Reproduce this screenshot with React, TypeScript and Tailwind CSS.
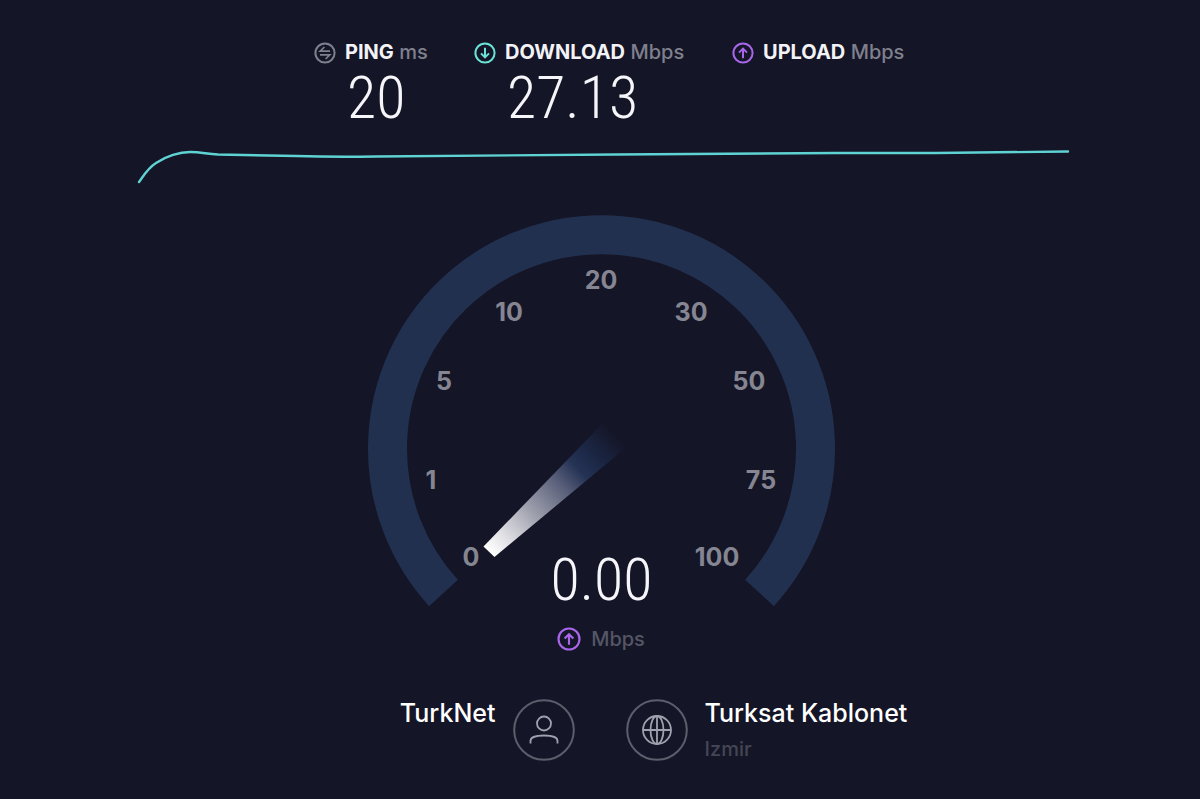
import React from "react";

const numberFont = "font-['Roboto_Condensed','Roboto',sans-serif] font-light text-[60px] leading-[56px] text-[#f6f6fa]";

const stats = [
    { id: 1, icon: "ping", label: "PING", unit: "ms", value: "20" },
    { id: 2, icon: "down", label: "DOWNLOAD", unit: "Mbps", value: "27.13" },
    { id: 3, icon: "up", label: "UPLOAD", unit: "Mbps", value: "" },
];

const marks = [
    { text: "0", x: 111, y: 349 },
    { text: "1", x: 71, y: 272 },
    { text: "5", x: 84, y: 173 },
    { text: "10", x: 149, y: 104 },
    { text: "20", x: 241, y: 72 },
    { text: "30", x: 331, y: 104 },
    { text: "50", x: 389, y: 173 },
    { text: "75", x: 401, y: 272 },
    { text: "100", x: 357, y: 349 },
];

const StatIcon = ({ name, className }: { name: string; className: string }) => {
    const color = name === "ping" ? "#7f808e" : name === "down" ? "#6be3d6" : "#a866ea";
    return (
        <svg viewBox="0 0 22 22" className={className} fill="none" stroke={color} strokeWidth="2" aria-hidden="true">
            <circle cx="11" cy="11" r="9.6" />
            {name === "ping" && <path d="M16 9.200H6.200L10.400 5M6 12.800H15.800L11.600 17" strokeWidth="1.7" />}
            {name === "down" && <path d="M11 5.800V15.400M7 11.400L11 15.400L15 11.400" />}
            {name === "up" && <path d="M11 16.200V6.600M7 10.600L11 6.600L15 10.600" />}
        </svg>
    );
};

const Stats = () => (
    <header className="grid grid-cols-[160px_258px_172px] justify-center pl-[18px]">
        {stats.map((item) => (
            <div key={item.id} className="flex gap-[9px]">
                <StatIcon name={item.icon} className="mt-[2px] size-[22px] shrink-0" />
                <div>
                    <p className="text-[20px] leading-[24px] font-medium text-[#7f808e] whitespace-nowrap">
                        <span className="font-bold text-[#f3f3f7]">{item.label}</span> {item.unit}
                    </p>
                    <p className={`mt-[6px] h-[62px] pl-[2px] ${numberFont}`}>{item.value}</p>
                </div>
            </div>
        ))}
    </header>
);

const SpeedLine = () => (
    <div className="mt-[14px] pl-[136px] pr-[130px]">
        <svg viewBox="0 0 934 40" preserveAspectRatio="none" className="h-[40px] w-full" fill="none" aria-hidden="true">
            <path
                d="M3 36C8 29 12 22 20 17C30 10 44 6 54 6C66 6 70 8 82 8.500L160 10C190 11 210 11 240 10.500L480 8.500L700 7L800 7L932 5.500"
                stroke="#5fd3d3"
                strokeWidth="2.4"
                strokeLinecap="round"
            />
        </svg>
    </div>
);

const Gauge = () => (
    <section className="mx-auto mt-[22px] grid w-[480px] max-w-full">
        <svg viewBox="0 0 480 400" className="w-full [grid-area:1/1]" aria-hidden="true">
            <defs>
                <linearGradient id="needle" gradientUnits="userSpaceOnUse" x1="129" y1="344" x2="258" y2="227">
                    <stop offset="0" stopColor="#ffffff" />
                    <stop offset="0.12" stopColor="#e2e2e6" />
                    <stop offset="0.35" stopColor="#9a9caa" />
                    <stop offset="0.56" stopColor="#5a607a" />
                    <stop offset="0.7" stopColor="#243254" />
                    <stop offset="0.82" stopColor="#1b2644" />
                    <stop offset="1" stopColor="#141526" />
                </linearGradient>
            </defs>
            <path d="M83.500 385A214 214 0 1 1 399.500 385" fill="none" stroke="#22304f" strokeWidth="39" />
            <path d="M123.500 338.500L134.500 349L268 238L243 215Z" fill="url(#needle)" />
            {marks.map((m) => (
                <text
                    key={m.text}
                    x={m.x}
                    y={m.y}
                    dy="9"
                    textAnchor="middle"
                    className="fill-[#858692] text-[25px] font-bold"
                >
                    {m.text}
                </text>
            ))}
        </svg>
        <p className={`self-end pl-[3px] text-center [grid-area:1/1] ${numberFont}`}>0.00</p>
    </section>
);

const Servers = () => (
    <footer className="mt-[48px] grid grid-cols-2 gap-[51px]">
        <div className="flex justify-end gap-[17px]">
            <p className="text-[25px] leading-[28px] font-medium text-white">TurkNet</p>
            <svg viewBox="0 0 62 62" className="size-[62px] shrink-0" fill="none" stroke="#a0a1ae" strokeWidth="1.8" aria-hidden="true">
                <circle cx="31" cy="31" r="29.800" stroke="#5d5e6c" strokeWidth="2" />
                <circle cx="31" cy="24.500" r="7" />
                <path d="M17.500 44.500V42C17.500 38 22 36.500 31 36.500S44.500 38 44.500 42V44.500" />
            </svg>
        </div>
        <div className="flex gap-[17px]">
            <svg viewBox="0 0 62 62" className="size-[62px] shrink-0" fill="none" stroke="#a0a1ae" strokeWidth="1.8" aria-hidden="true">
                <circle cx="31" cy="31" r="29.800" stroke="#5d5e6c" strokeWidth="2" />
                <circle cx="31" cy="31" r="14" />
                <ellipse cx="31" cy="31" rx="6.500" ry="14" />
                <path d="M17 31H45M31 17V45" />
            </svg>
            <div>
                <p className="text-[25px] leading-[28px] font-medium text-white">Turksat Kablonet</p>
                <p className="mt-[10px] text-[20px] leading-[24px] font-medium text-[#444554]">Izmir</p>
            </div>
        </div>
    </footer>
);

const App = () => {
    return (
        <main className="min-h-screen bg-[#141526] pt-[40px] font-['Inter',sans-serif]">
            <Stats />
            <SpeedLine />
            <Gauge />
            <div className="mt-[19px] flex items-center justify-center gap-[10px] pl-[2px] text-[20px] leading-[24px] font-medium text-[#555665]">
                <StatIcon name="up" className="size-[24px]" />
                Mbps
            </div>
            <Servers />
        </main>
    );
};

export default App;
